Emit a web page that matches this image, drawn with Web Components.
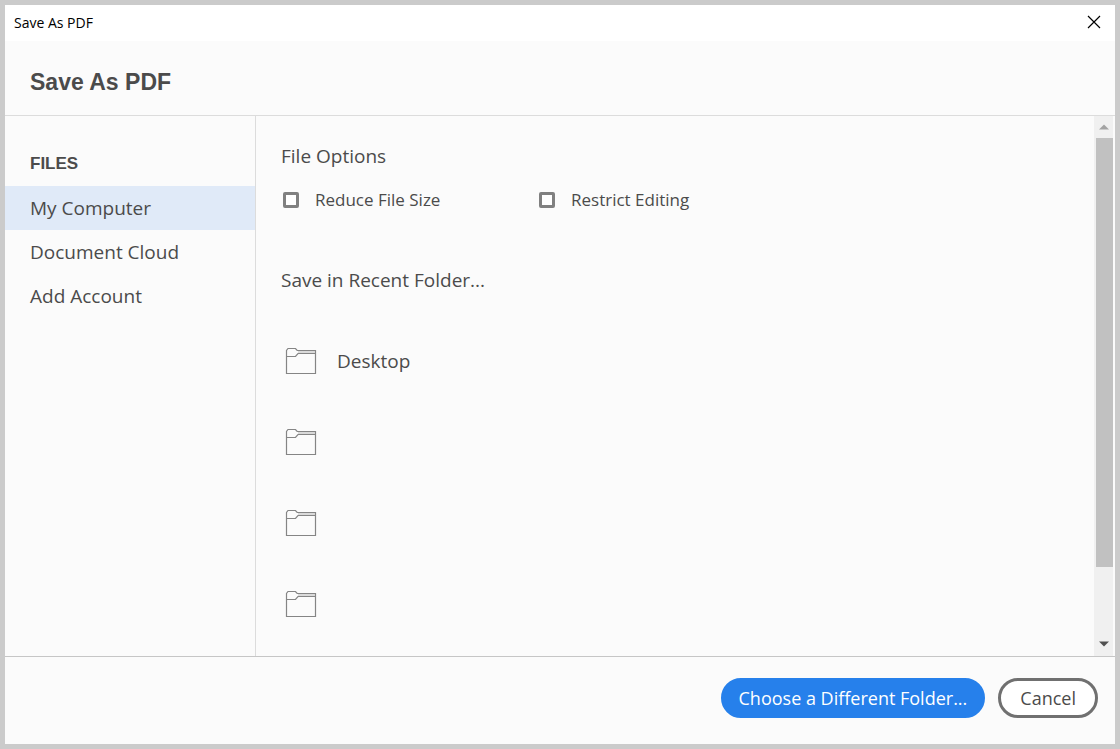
<!DOCTYPE html>
<html lang="en">
<head>
<meta charset="utf-8">
<title>Save As PDF</title>
<style>
html, body { margin: 0; }
body { font-family: "Open Sans", "Noto Sans", sans-serif; color: #4b4b4b; background: #cbcbcb; }
</style>
</head>
<body>
<save-dialog>
  <title-bar slot="title">Save As PDF</title-bar>
  <span slot="heading">Save As PDF</span>
  <location-nav slot="nav" heading="Files">
    <location-item current>My Computer</location-item>
    <location-item>Document Cloud</location-item>
    <location-item>Add Account</location-item>
  </location-nav>
  <option-group heading="File Options">
    <check-option>Reduce File Size</check-option>
    <check-option>Restrict Editing</check-option>
  </option-group>
  <folder-list heading="Save in Recent Folder...">
    <folder-row>Desktop</folder-row>
    <folder-row></folder-row>
    <folder-row></folder-row>
    <folder-row></folder-row>
  </folder-list>
  <scroll-rail slot="rail"></scroll-rail>
  <pill-button slot="actions" primary>Choose a Different Folder...</pill-button>
  <pill-button slot="actions">Cancel</pill-button>
</save-dialog>

<script>
const define = (name, markup, setup) => {
  const template = document.createElement('template');
  template.innerHTML = markup;
  customElements.define(name, class extends HTMLElement {
    constructor() {
      super();
      this.attachShadow({ mode: 'open' }).append(template.content.cloneNode(true));
    }
    connectedCallback() {
      if (setup) setup(this, this.shadowRoot);
    }
  });
};

const setHeading = (host, root) => {
  root.querySelector('h2').textContent = host.getAttribute('heading');
};

define('save-dialog', `
  <style>
    :host { display: flex; flex-direction: column; box-sizing: border-box; min-height: 100vh;
      border: 5px solid #cbcbcb; background: #fbfbfb; }
    header { padding: 27px 25px 19px; border-bottom: 1px solid #dcdcdc; }
    h1 { margin: 0; font: bold 23px/28px "Liberation Sans", Arial, sans-serif; }
    .body { flex: 1; display: grid; grid-template-columns: 251px 1fr 21px; }
    .nav { border-right: 1px solid #dcdcdc; }
    main { padding: 26px 25px 0; }
    footer { display: flex; justify-content: flex-end; align-items: center; gap: 13px;
      padding: 21px 17px 26px; border-top: 1px solid #c6c6c6; }
  </style>
  <slot name="title"></slot>
  <header><h1><slot name="heading"></slot></h1></header>
  <div class="body">
    <div class="nav"><slot name="nav"></slot></div>
    <main><slot></slot></main>
    <slot name="rail"></slot>
  </div>
  <footer><slot name="actions"></slot></footer>`);

define('title-bar', `
  <style>
    :host { display: flex; justify-content: space-between; align-items: center; height: 36px;
      padding: 0 12px 0 9px; box-sizing: border-box; background: #fff; color: #000;
      font-size: 14px; line-height: 20px; }
    button { display: flex; padding: 0 0 2px; border: 0; background: none; color: inherit; }
  </style>
  <span><slot></slot></span>
  <button type="button" aria-label="Close">
    <svg width="18" height="18" viewBox="0 0 18 18" fill="none" stroke="currentColor" stroke-width="1.2"><path d="M3 3l12 12M15 3L3 15"/></svg>
  </button>`);

define('location-nav', `
  <style>
    :host { display: block; padding-top: 36px; }
    h2 { margin: 0 0 10px; padding-left: 25px; text-transform: uppercase;
      font: bold 17px/24px "Liberation Sans", Arial, sans-serif; }
  </style>
  <nav><h2></h2><slot></slot></nav>`, setHeading);

define('location-item', `
  <style>
    :host { display: block; }
    :host([current]) { background: #e0eaf8; }
    a { display: block; padding-left: 25px; color: inherit; text-decoration: none;
      font-size: 19px; line-height: 44px; }
  </style>
  <a href="#"><slot></slot></a>`, (host, root) => {
  if (host.hasAttribute('current')) root.querySelector('a').setAttribute('aria-current', 'page');
});

define('option-group', `
  <style>
    :host { display: block; }
    h2 { margin: 0 0 16px; font-size: 19px; line-height: 28px; font-weight: 400; }
    div { display: grid; grid-template-columns: 256px 256px; }
  </style>
  <section><h2></h2><div><slot></slot></div></section>`, setHeading);

define('check-option', `
  <style>
    :host { display: block; }
    label { display: flex; align-items: center; gap: 16px; padding-left: 2px;
      font-size: 17px; line-height: 28px; }
    input { appearance: none; width: 16px; height: 16px; margin: 0; box-sizing: border-box;
      border: 3px solid #808080; border-radius: 2px; background: #fff; }
    input:checked { background: #2680eb; }
  </style>
  <label><input type="checkbox"><span><slot></slot></span></label>`);

define('folder-list', `
  <style>
    :host { display: block; padding-top: 52px; }
    h2 { margin: 0 0 26px; font-size: 19px; line-height: 28px; font-weight: 400; }
  </style>
  <section><h2></h2><slot></slot></section>`, setHeading);

define('folder-row', `
  <style>
    :host { display: block; }
    button { display: flex; align-items: center; gap: 20px; width: 100%; height: 81px;
      padding: 0 0 0 4px; border: 0; background: none; color: inherit;
      font: inherit; font-size: 19px; line-height: 28px; text-align: left; }
    svg { flex: none; }
  </style>
  <button type="button" aria-label="Recent folder">
    <svg width="32" height="28" viewBox="0 0 32 28" fill="none" stroke="#858585" stroke-width="1.2">
      <path d="M1.5 26.5V3.5L3 1.5H10.5L12.2 3.5H30.5V26.5Z"/>
      <path d="M1.5 9.5H10.5L13 6.5H30.5"/>
      <path d="M13 5H30" stroke="#c4c4c4"/>
    </svg>
    <span><slot></slot></span>
  </button>`, (host, root) => {
  if (host.textContent.trim()) root.querySelector('button').removeAttribute('aria-label');
});

define('scroll-rail', `
  <style>
    :host { display: flex; flex-direction: column; background: #f0f0f0;
      border-right: 2px solid #fbfbfb; }
    button { display: flex; justify-content: center; align-items: center; height: 22px;
      padding: 0; border: 0; background: none; }
    .down { height: 24px; }
    .track { flex: 1; display: flex; flex-direction: column; padding-left: 2px; }
    .thumb { flex: 430; background: #c1c1c1; }
    .rest { flex: 65; }
  </style>
  <button type="button" aria-label="Scroll up"><svg width="10" height="6" viewBox="0 0 10 6"><path d="M0 5.5L5 0.5L10 5.5Z" fill="#a3a3a3"/></svg></button>
  <div class="track"><div class="thumb"></div><div class="rest"></div></div>
  <button type="button" class="down" aria-label="Scroll down"><svg width="10" height="6" viewBox="0 0 10 6"><path d="M0 0.5L5 5.5L10 0.5Z" fill="#505050"/></svg></button>`);

define('pill-button', `
  <style>
    :host { display: block; }
    button { display: block; box-sizing: border-box; height: 40px; padding: 0 19px;
      border: 3px solid #707070; border-radius: 20px; background: #fff; color: #4b4b4b;
      font: inherit; font-size: 18px; line-height: 32px; white-space: nowrap; }
    :host([primary]) button { padding: 0 15px; border-color: #2680eb; background: #2680eb; color: #fff; }
  </style>
  <button type="button"><slot></slot></button>`);
</script>
</body>
</html>
